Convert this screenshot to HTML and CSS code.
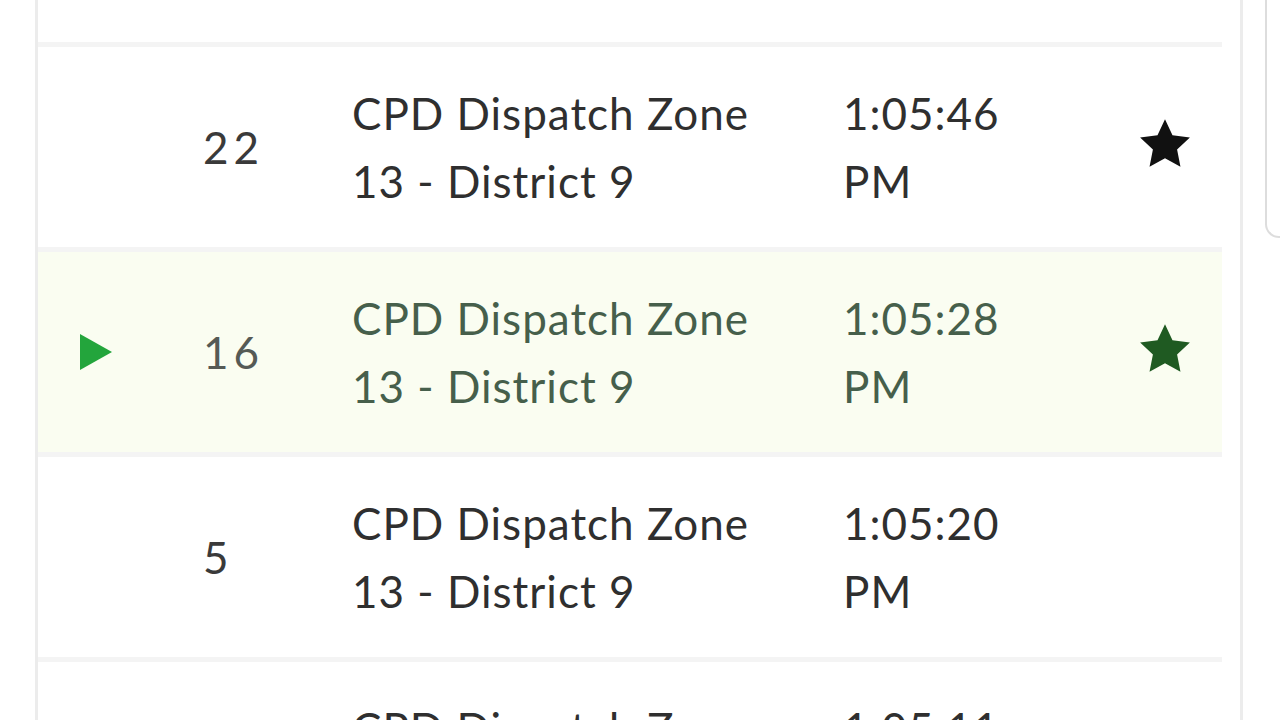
FILE: index.html
```html
<!DOCTYPE html>
<html lang="en">
  <head>
    <meta charset="UTF-8" />
    <meta name="viewport" content="width=device-width, initial-scale=1.0" />
    <title>Calls</title>
    <link rel="stylesheet" href="styles.css">
  </head>
  <body>
    <div class="page">
      <div class="call-list">
        <div class="row-tail"></div>

        <div class="call-row">
          <div class="cell-icon"></div>
          <div class="cell-num">22</div>
          <div class="cell-name">CPD Dispatch Zone 13 - District 9</div>
          <div class="cell-time">1:05:46 PM</div>
          <div class="cell-star">
            <svg class="star" viewBox="0 0 24 24"><path d="M12 1.8l3.1 6.6 7.2.9-5.3 5 1.4 7.1L12 17.9l-6.4 3.5 1.4-7.1-5.3-5 7.2-.9z"/></svg>
          </div>
        </div>

        <div class="call-row playing">
          <div class="cell-icon">
            <svg class="play" viewBox="0 0 32 36"><path d="M0 0L32 18L0 36z"/></svg>
          </div>
          <div class="cell-num">16</div>
          <div class="cell-name">CPD Dispatch Zone 13 - District 9</div>
          <div class="cell-time">1:05:28 PM</div>
          <div class="cell-star">
            <svg class="star" viewBox="0 0 24 24"><path d="M12 1.8l3.1 6.6 7.2.9-5.3 5 1.4 7.1L12 17.9l-6.4 3.5 1.4-7.1-5.3-5 7.2-.9z"/></svg>
          </div>
        </div>

        <div class="call-row">
          <div class="cell-icon"></div>
          <div class="cell-num">5</div>
          <div class="cell-name">CPD Dispatch Zone 13 - District 9</div>
          <div class="cell-time">1:05:20 PM</div>
          <div class="cell-star"></div>
        </div>

        <div class="call-row">
          <div class="cell-icon"></div>
          <div class="cell-num">3</div>
          <div class="cell-name">CPD Dispatch Zone 13 - District 9</div>
          <div class="cell-time">1:05:11 PM</div>
          <div class="cell-star"></div>
        </div>
      </div>
      <div class="side-box"></div>
    </div>
  </body>
</html>
```

FILE: styles.css
```css
body {
  margin: 0;
  background: #ffffff;
  font-family: Lato, "Open Sans", sans-serif;
  color: #2f2f2f;
  overflow: hidden;
}

.page {
  display: flex;
  align-items: flex-start;
  height: 720px;
  padding-left: 35px;
}

.call-list {
  flex-shrink: 0;
  width: 1184px;
  height: 720px;
  padding-right: 18px;
  border-left: 3px solid #ececec;
  border-right: 3px solid #ececec;
  overflow: hidden;
}

.row-tail {
  height: 42px;
}

.call-row {
  display: grid;
  grid-template-columns: 165px 149px 491px 297px 1fr;
  align-items: center;
  height: 200px;
  border-top: 5px solid #f4f4f4;
  font-size: 44px;
  line-height: 68px;
}

.call-row.playing {
  background: #fafdf1;
  color: #465f4b;
}

.cell-icon {
  padding-left: 42px;
  display: flex;
  align-items: center;
}

.play {
  width: 32px;
  height: 36px;
  fill: #23a53c;
}

.cell-num {
  color: #3a3a3a;
  letter-spacing: 5px;
}

.playing .cell-num {
  color: #555a55;
}

.cell-name {
  padding-right: 66px;
  letter-spacing: 1px;
}

.cell-time {
  padding-right: 110px;
  letter-spacing: 1px;
}

.cell-star {
  display: flex;
  align-items: center;
  margin-top: -6px;
}

.star {
  width: 58px;
  height: 58px;
  fill: #111111;
  margin-left: -4px;
}

.playing .star {
  fill: #1f5a22;
}

.side-box {
  flex-shrink: 0;
  margin-left: 22px;
  width: 20px;
  height: 236px;
  border-left: 2px solid #dddddd;
  border-bottom: 2px solid #dddddd;
  border-bottom-left-radius: 14px;
}
```
